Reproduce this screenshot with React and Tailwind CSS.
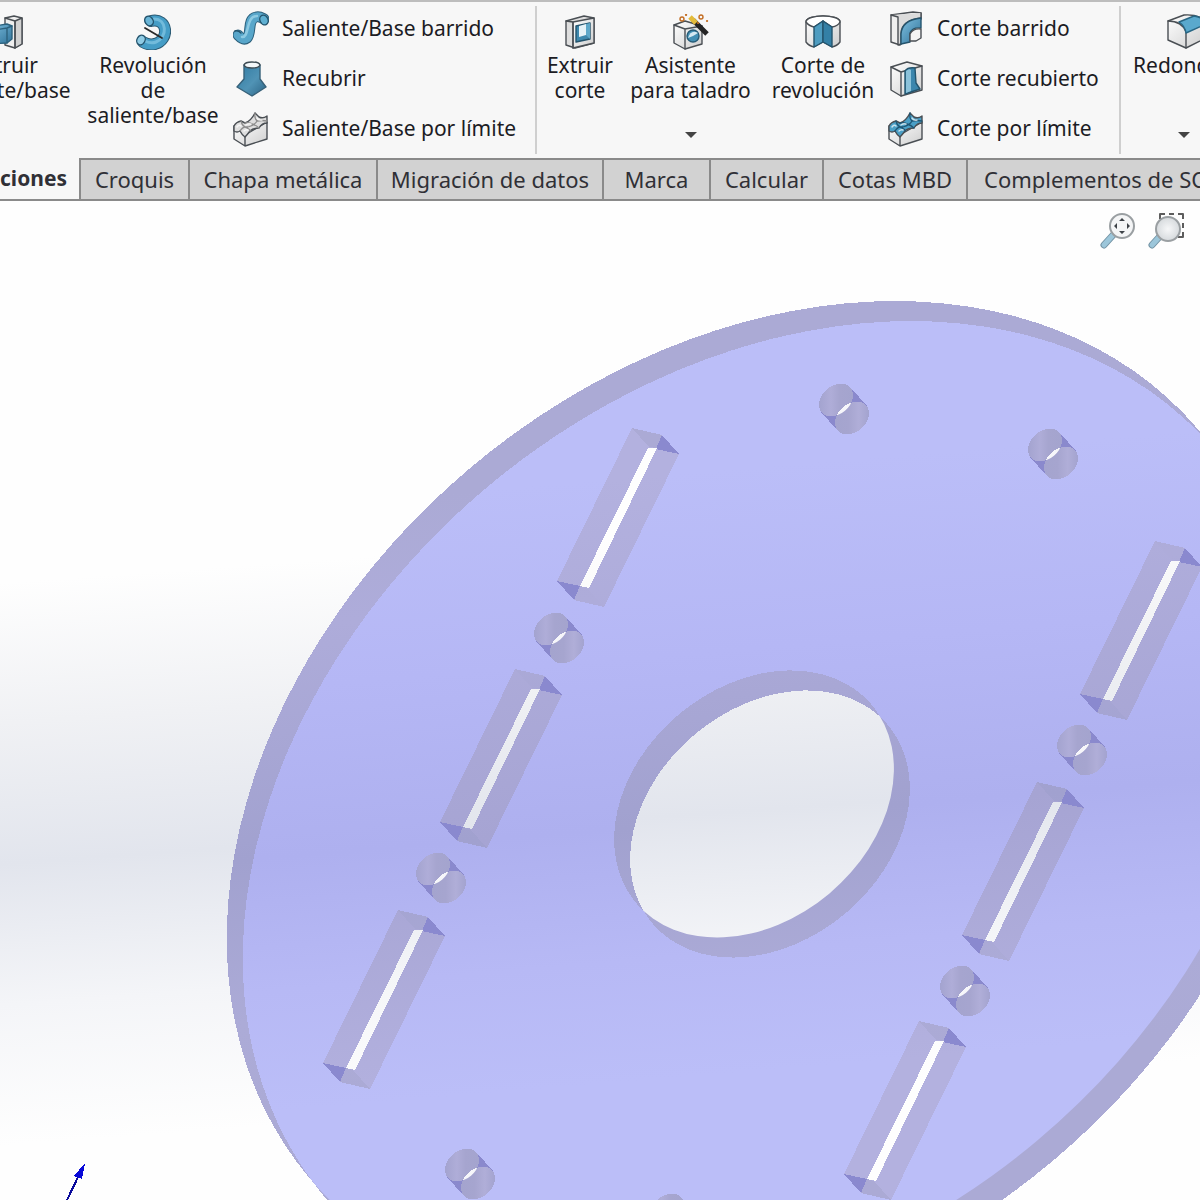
const EDGE = "#4a4f54";

function Svg({ size = 36, children }) {
  return (
    <svg width={size} height={size} viewBox="0 0 36 36" fill="none" stroke={EDGE} strokeWidth="1.4" strokeLinejoin="round" strokeLinecap="round" aria-hidden="true" className="shrink-0">
      {children}
    </svg>
  );
}

const ExtrudeBoss = () => (
  <Svg>
    <path d="M18 4 27 2 35 4V30L28 34 18 31Z" fill="#efefef" />
    <path d="M28 7 35 4V30L28 34Z" fill="#d2d2d2" />
    <path d="M18 4 28 7V34" />
    <path d="M1 13 20 10 25 12V25L20 29 1 30Z" fill="url(#steel)" stroke="#2c617d" />
    <path d="M1 17 20 14 25 12M20 14V29" stroke="#2c617d" />
  </Svg>
);
const RevolveBoss = () => (
  <Svg>
    <path d="M16 7C33 3 35 26 20 30C15 31 11 30 8 28" stroke="#2b5a73" strokeWidth="12" />
    <path d="M16 7C33 3 35 26 20 30C15 31 11 30 8 28" stroke="#459dc6" strokeWidth="10" />
    <path d="M19 5C32 5 33 23 21 28C16 30 12 28 10 27" stroke="#86c8e4" strokeWidth="3" opacity=".7" />
    <ellipse cx="14" cy="7" rx="4" ry="5" fill="#69b4d6" stroke="#24546d" transform="rotate(-35 14 7)" />
    <ellipse cx="6" cy="26" rx="4" ry="5" fill="#8fcbe4" stroke="#24546d" transform="rotate(30 6 26)" />
    <path d="M10 14 27 24" stroke="#2a2a2a" strokeWidth="1.800" />
  </Svg>
);
const SweepBoss = () => (
  <Svg>
    <path d="M5 24C7 26 10 30 14 27C19 22 14 8 23 6C27 5 29 7 31 8" stroke="#2c5f7a" strokeWidth="11" />
    <path d="M5 24C7 26 10 30 14 27C19 22 14 8 23 6C27 5 29 7 31 8" stroke="#58a6ca" strokeWidth="9" />
    <path d="M9 26C17 27 12 5 24 5" stroke="#8ecae2" strokeWidth="2.500" />
    <ellipse cx="31" cy="9" rx="4" ry="5" fill="#5fb0d2" stroke="#24546d" transform="rotate(-25 31 9)" />
    <path d="M2 20Q5 19 8 22" stroke="#24546d" />
  </Svg>
);
const LoftBoss = () => (
  <Svg>
    <path d="M11 4V18L4 26 19 35 33 26 27 18V4Z" fill="url(#loft)" stroke="#376179" />
    <path d="M11 4Q12 1 19 1Q26 1 27 4Q26 7 19 7Q12 7 11 4Z" fill="#f4f8fa" stroke="#3f4d55" />
  </Svg>
);
const Boundary = ({ top, shade }) => (
  <Svg>
    <path d="M1 15V28L12 35V24ZM12 24V35L34 28V11Z" fill="url(#grey)" />
    <path d="M1 15Q3 11 8 10L12 12Q18 10 22 2L26 6Q30 8 34 5V12Q29 12 26 17Q20 17 17 20Q14 24 12 26Q9 24 7 20Q4 22 1 20Z" fill={top} />
    <path d="M8 10Q9 15 14 17Q18 19 17 20M12 12Q17 11 19 13Q23 14 26 17M7 20Q10 15 15 16Q22 14 24 10Q29 9 34 10M22 2Q21 7 24 10" stroke={shade} strokeWidth="1.300" />
    <path d="M4 16Q6 13 8 15M13 14Q16 12 18 13M11 20Q13 18 15 19M24 7Q26 10 29 9" stroke="#ffffff" strokeWidth="1.500" opacity=".7" />
  </Svg>
);
const ExtrudeCut = () => (
  <Svg>
    <path d="M4 7 22 2 32 4V29L13 34 4 31Z" fill="#dedede" />
    <path d="M11 8 32 4V29L11 34Z" fill="url(#grey)" />
    <path d="M4 7 11 8V34" />
    <path d="M14 12 28 9V25L14 28Z" fill="#3e88ad" stroke="#24546d" />
    <path d="M17 12 24 10V21L17 23Z" fill="#e6f2f7" stroke="none" />
    <path d="M24 10 28 9V25L24 21Z" fill="#5fa8c9" stroke="none" />
  </Svg>
);
const HoleWizard = () => (
  <Svg>
    <path d="M1 11 12 7 29 12V30L12 35 1 29Z" fill="url(#grey)" />
    <path d="M1 11 12 15 29 12M12 15V35" />
    <circle cx="20" cy="22" r="6" fill="#438fb4" stroke="#275c77" />
    <path d="M15 24Q18 15 25 19L20 22Z" fill="#d5e9f2" stroke="none" />
    <path d="M20 6 34 20" stroke="#242424" strokeWidth="5" strokeLinecap="butt" />
    <path d="M17 3 23 9" stroke="#e3bb3a" strokeWidth="5" strokeLinecap="butt" />
    <g stroke="#c36d22" strokeWidth="1.400"><circle cx="9" cy="5" r="2" /><circle cx="28" cy="3" r="2" /><path d="M13 1h.1M34 7h.1M25 9h.1" strokeWidth="2.200" /></g>
  </Svg>
);
const RevolveCut = () => (
  <Svg>
    <path d="M1 8C1 0 35 0 35 8V28Q32 32 27 33L18 28 9 33Q4 32 1 28Z" fill="url(#grey)" />
    <path d="M1 8C1 0 35 0 35 8Q33 12 27 13L18 7 9 13Q4 12 1 8" fill="#fff" />
    <path d="M9 13 18 7V28L9 33Z" fill="#4e9cc0" stroke="#24546d" />
    <path d="M18 7 27 13V33L18 28Z" fill="#3480a6" stroke="#24546d" />
  </Svg>
);
const SweepCut = () => (
  <Svg>
    <path d="M3 4 25 1 33 2V8L12 34 3 31Z" fill="#efefef" />
    <path d="M3 4 10 6V34L13 33V22Q14 9 33 7V2" fill="#dcdcdc" />
    <path d="M13 33V23Q14 9 33 7V17Q24 16 22 22V31Z" fill="url(#steel)" stroke="#24546d" />
    <path d="M22 30V23Q25 17 33 18V27L28 30Z" fill="#f4f4f4" />
  </Svg>
);
const LoftCut = () => (
  <Svg>
    <path d="M3 6 19 1 34 5V29L13 35 3 29Z" fill="url(#grey)" />
    <path d="M3 6 13 11 34 5M13 11V35" />
    <path d="M17 10Q20 6 27 7L28 22 32 28 17 33Z" fill="#3b86ad" stroke="#24546d" />
    <path d="M18 10Q21 7 23 9V30L18 32Z" fill="#8bc2da" stroke="none" />
  </Svg>
);
const Fillet = () => (
  <Svg>
    <path d="M2 7 18 1Q31 0 38 6V25L20 34 2 26Z" fill="url(#grey)" />
    <path d="M2 7Q16 7 20 18V34" />
    <path d="M13 8 28 2Q37 3 40 10L20 19Q19 12 13 8Z" fill="#5aa9cd" stroke="#286684" />
  </Svg>
);

function Glass({ children }) {
  return (
    <Svg>
      <path d="M4 32 14 21" stroke="#7393a4" strokeWidth="7" />
      <path d="M4 32 13 22" stroke="#9cc6da" strokeWidth="5" />
      {children}
    </Svg>
  );
}
const ZoomFit = () => (
  <Glass>
    <circle cx="22" cy="13" r="12" fill="#f4f5f6" stroke="#9a9fa2" strokeWidth="2" />
    <path d="m22 5 3 3h-6zM22 21l3-3h-6zM14 13l3-3v6zM30 13l-3-3v6z" fill="#3d4247" stroke="none" />
  </Glass>
);
const ZoomArea = () => (
  <Glass>
    <path d="M12 6V1H17M21 1H26M30 1H35V6M35 10V15M35 19V24H30" stroke="#5d5d5d" strokeWidth="2" strokeLinecap="butt" />
    <circle cx="20" cy="16" r="12" fill="url(#lens)" stroke="#9a9fa2" strokeWidth="2" />
  </Glass>
);

const Arrow = () => <span className="mt-auto mb-5 h-0 w-0 border-x-6 border-t-6 border-x-transparent border-t-[#444444]" />;

function Tool({ icon, lines, width, arrow }) {
  return (
    <button className={`flex h-full shrink-0 flex-col items-center pt-3 ${width}`}>
      {icon}
      <span className="mt-[3px] whitespace-nowrap leading-[25px]">
        {lines.map((l) => <span key={l} className="block">{l}</span>)}
      </span>
      {arrow && <Arrow />}
    </button>
  );
}

function Stack({ items, width }) {
  return (
    <div className={`flex h-full shrink-0 flex-col pt-[2px] ${width}`}>
      {items.map(([icon, label]) => (
        <button key={label} className="flex h-[50px] items-center gap-[13px] whitespace-nowrap text-left">
          {icon}
          <span>{label}</span>
        </button>
      ))}
    </div>
  );
}

const Separator = () => <div className="my-1 w-[2px] shrink-0 bg-[#cfcfcf]" />;

const tabs = [
  ["Croquis", "w-[109px] text-center"],
  ["Chapa metálica", "w-[188px] text-center"],
  ["Migración de datos", "w-[226px] text-center"],
  ["Marca", "w-[107px] text-center"],
  ["Calcular", "w-[113px] text-center"],
  ["Cotas MBD", "w-[144px] text-center"],
  ["Complementos de SOLIDWORKS", "px-4"],
];

const slots = [[632, 428], [515, 669], [398, 910], [1155, 541], [1037, 782], [919, 1021]];
const bores = [[844, 409], [1053, 454], [559, 638], [441, 878], [1082, 750], [965, 991], [470, 1174], [675, 1219]];

const BACK = [754, 804];
const FRONT = [770, 824];

function discPath([cx, cy], a, b) {
  const dx = a * Math.cos((40 * Math.PI) / 180);
  const dy = a * Math.sin((40 * Math.PI) / 180);
  return `M${cx - dx} ${cy + dy}A${a} ${b} -40 0 1 ${cx + dx} ${cy - dy}A${a} ${b} -40 0 1 ${cx - dx} ${cy + dy}Z`;
}

function Plate() {
  return (
    <svg viewBox="0 201 1200 999" preserveAspectRatio="xMidYMin slice" className="block w-full grow" shapeRendering="crispEdges" role="img" aria-label="Disco">
      <defs>
        <linearGradient id="steel" x1="0" y1="0" x2="1" y2="1">
          <stop offset="0" stopColor="#7fc0e0" />
          <stop offset="1" stopColor="#2f7299" />
        </linearGradient>
        <linearGradient id="loft" x1="0" y1="0" x2="1" y2="1">
          <stop offset="0" stopColor="#2f7aa3" />
          <stop offset=".55" stopColor="#5093b5" />
          <stop offset="1" stopColor="#2c6485" />
        </linearGradient>
        <linearGradient id="grey" x1="0" y1="0" x2="1" y2="1">
          <stop offset="0" stopColor="#ffffff" />
          <stop offset="1" stopColor="#cecece" />
        </linearGradient>
        <radialGradient id="lens">
          <stop offset="0" stopColor="#f6f7f8" />
          <stop offset="1" stopColor="#d6dadd" />
        </radialGradient>
        <linearGradient id="bg" gradientUnits="userSpaceOnUse" x1="600" y1="540" x2="640" y2="1100">
          <stop offset="0" stopColor="#fefefe" />
          <stop offset=".25" stopColor="#f0f1f4" />
          <stop offset=".5" stopColor="#e2e5ed" />
          <stop offset=".75" stopColor="#f4f5f8" />
          <stop offset="1" stopColor="#fefefe" />
        </linearGradient>
        <linearGradient id="face" gradientUnits="userSpaceOnUse" x1="600" y1="480" x2="650" y2="1080">
          <stop offset="0" stopColor="#bbbef8" />
          <stop offset=".3" stopColor="#b5b7f5" />
          <stop offset=".58" stopColor="#aeb0ef" />
          <stop offset=".8" stopColor="#b7b9f5" />
          <stop offset="1" stopColor="#bbbef8" />
        </linearGradient>
        <linearGradient id="wall" gradientUnits="userSpaceOnUse" x1="600" y1="480" x2="650" y2="1080">
          <stop offset="0" stopColor="#abaad5" />
          <stop offset=".2" stopColor="#aeacda" />
          <stop offset=".58" stopColor="#a1a1cf" />
          <stop offset=".85" stopColor="#acabd7" />
          <stop offset="1" stopColor="#abaad5" />
        </linearGradient>
        <linearGradient id="side" gradientUnits="userSpaceOnUse" x1="600" y1="480" x2="650" y2="1080">
          <stop offset="0" stopColor="#b3b1df" />
          <stop offset=".58" stopColor="#a6a4d3" />
          <stop offset="1" stopColor="#b3b1df" />
        </linearGradient>
        <linearGradient id="boreBackShade" x1="0" x2="1">
          <stop offset="0" stopColor="#a3a3cf" />
          <stop offset=".35" stopColor="#afadd8" />
          <stop offset=".6" stopColor="#a6a5cf" />
          <stop offset="1" stopColor="#a4a4ce" />
        </linearGradient>
        <linearGradient id="boreFrontShade" x1="0" x2="1">
          <stop offset="0" stopColor="#a4a4ce" />
          <stop offset=".4" stopColor="#a6a5cf" />
          <stop offset=".7" stopColor="#b0aed8" />
          <stop offset="1" stopColor="#a3a3cf" />
        </linearGradient>
        <clipPath id="discBack"><path d={discPath(BACK, 581, 440)} /></clipPath>
        <clipPath id="holeBack"><path d={discPath(BACK, 154, 117)} /></clipPath>
        <clipPath id="boreBack"><path d={discPath([-8, -9], 19, 14)} /></clipPath>
      </defs>
      <rect y="201" width="1200" height="999" fill="url(#bg)" />
      <path d={discPath(BACK, 581, 440)} fill="url(#wall)" />
      <path d={discPath(FRONT, 581, 440)} fill="url(#wall)" />
      <g clipPath="url(#discBack)">
        <path d={discPath(FRONT, 581, 440)} fill="url(#face)" />
      </g>
      <path d={discPath(BACK, 154, 117)} fill="url(#wall)" />
      <path d={discPath(FRONT, 154, 117)} fill="url(#wall)" />
      <g clipPath="url(#holeBack)">
        <path d={discPath(FRONT, 154, 117)} fill="url(#bg)" />
      </g>
      {slots.map(([x, y]) => {
        const pts = (list) => list.map(([a, b]) => `${x + a},${y + b}`).join(" ");
        return (
          <g key={`${x}-${y}`}>
            <polygon points={pts([[0, 0], [30, 7], [47, 26], [-28, 179], [-58, 172], [-75, 153]])} fill="url(#side)" />
            <polygon points={pts([[0, 0], [30, 7], [25, 20], [17, 19]])} fill="url(#wall)" />
            <polygon points={pts([[-58, 172], [-28, 179], [-45, 160], [-52, 158]])} fill="url(#wall)" />
            <polygon points={pts([[30, 7], [47, 26], [24, 21]])} fill="#8a89cf" />
            <polygon points={pts([[-75, 153], [-58, 172], [-52, 158]])} fill="#8a89cf" />
            <polygon points={pts([[16, 20], [25, 20], [-43, 160], [-52, 158]])} fill="url(#bg)" />
          </g>
        );
      })}
      {bores.map(([x, y]) => (
        <g key={`${x}-${y}`} transform={`translate(${x} ${y})`}>
          <path d="M7 -21 23 -3 -7 21 -23 3Z" fill="#8a89cd" />
          <path d={discPath([-8, -9], 19, 14)} fill="url(#boreBackShade)" />
          <path d={discPath([8, 9], 19, 14)} fill="url(#boreFrontShade)" />
          <g clipPath="url(#boreBack)">
            <path d={discPath([8, 9], 19, 14)} fill="#f6f6fa" />
          </g>
        </g>
      ))}
      <path d="M67 1200 80 1173" stroke="#0a0a9c" strokeWidth="2" />
      <path d="M85 1163 74 1176 82 1179Z" fill="#0808d8" />
    </svg>
  );
}

export default function App() {
  return (
    <div className="flex min-h-screen flex-col overflow-hidden bg-[#fefefe] font-['Noto_Sans',sans-serif] text-[21px] text-[#1c1c24]">
      <header className="flex h-[158px] overflow-hidden border-t-2 border-[#bdbdbd] bg-[#f7f7f7]">
        <div className="-ml-[63px] flex shrink-0">
          <Tool icon={<ExtrudeBoss />} lines={["Extruir", "saliente/base"]} width="w-[136px]" />
          <Tool icon={<RevolveBoss />} lines={["Revolución", "de", "saliente/base"]} width="w-[160px]" />
          <Stack width="w-[302px]" items={[[<SweepBoss />, "Saliente/Base barrido"], [<LoftBoss />, "Recubrir"], [<Boundary top="#dedede" shade="#8c8c8c" />, "Saliente/Base por límite"]]} />
        </div>
        <Separator />
        <Tool icon={<ExtrudeCut />} lines={["Extruir", "corte"]} width="w-[86px]" />
        <Tool icon={<HoleWizard />} lines={["Asistente", "para taladro"]} width="w-[135px]" arrow />
        <Tool icon={<RevolveCut />} lines={["Corte de", "revolución"]} width="w-[130px]" />
        <Stack width="w-[231px]" items={[[<SweepCut />, "Corte barrido"], [<LoftCut />, "Corte recubierto"], [<Boundary top="#4a9fc6" shade="#1f5674" />, "Corte por límite"]]} />
        <Separator />
        <Tool icon={<Fillet />} lines={["Redondeo"]} width="w-[125px]" arrow />
      </header>
      <nav className="flex h-[43px] overflow-hidden border-b-2 border-[#8a8a8a] text-[22px] text-[#303036]">
        <button className="flex w-[79px] shrink-0 items-center justify-end bg-[#f7f7f7] pr-3 text-[21px] font-bold">Operaciones</button>
        {tabs.map(([label, width]) => (
          <button key={label} className={`shrink-0 whitespace-nowrap border-t-2 border-l-2 border-[#8a8a8a] bg-[#d2d2d2] ${width}`}>{label}</button>
        ))}
      </nav>
      <main className="relative flex grow flex-col">
        <Plate />
        <div className="absolute top-3 right-4 flex gap-3">
          <button aria-label="Zoom para ajustar"><ZoomFit /></button>
          <button aria-label="Zoom encuadre"><ZoomArea /></button>
        </div>
      </main>
    </div>
  );
}
